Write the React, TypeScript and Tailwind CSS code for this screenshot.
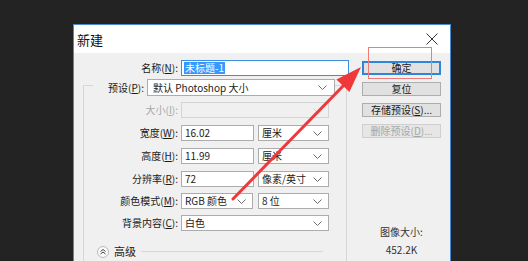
import React from "react";

function Chev({ color = "#6b6b6b" }: { color?: string }) {
  return (
    <svg width="9" height="5" viewBox="0 0 9 5" className="shrink-0">
      <polyline points="0.5,0.5 4.5,4.5 8.5,0.5" fill="none" stroke={color} strokeWidth="1" />
    </svg>
  );
}

function U({ children }: { children: React.ReactNode }) {
  return <span className="underline underline-offset-[1px]">{children}</span>;
}

function Label({ children, disabled }: { children: React.ReactNode; disabled?: boolean }) {
  return (
    <div className={`w-[95px] shrink-0 text-right leading-none whitespace-nowrap pr-[1px] ${disabled ? "text-[#a8a8a8]" : "text-[#1a1a1a]"}`}>
      {children}
    </div>
  );
}

function Input({ w, children }: { w: string; children?: React.ReactNode }) {
  return (
    <div className={`${w} h-full bg-white border border-[#acacac] flex items-center pl-[3px] leading-none`}>
      {children}
    </div>
  );
}

function Select({ w, children }: { w: string; children?: React.ReactNode }) {
  return (
    <div className={`${w} h-full bg-white border border-[#acacac] flex items-center justify-between pl-[3px] pr-[6px] leading-none whitespace-nowrap`}>
      <span>{children}</span>
      <Chev />
    </div>
  );
}

function Btn({ children, primary, disabled }: { children: React.ReactNode; primary?: boolean; disabled?: boolean }) {
  const cls = primary
    ? "border-2 border-[#2f84dc] bg-[#e1e1e1] text-[#1a1a1a]"
    : disabled
    ? "border border-[#cfcfcf] bg-[#e6e6e6] text-[#a6a6a6]"
    : "border border-[#adadad] bg-[#e1e1e1] text-[#1a1a1a]";
  return (
    <div className={`w-[79px] h-[14px] flex items-center justify-center leading-none whitespace-nowrap ${cls}`}>{children}</div>
  );
}

export default function App() {
  return (
    <div className="relative w-[528px] h-[261px] overflow-hidden bg-[#232323] font-['Noto_Sans_CJK_SC',sans-serif] text-[10px] text-[#1a1a1a]">
      <div className="pl-[73px] pt-[24px]">
        <div className="w-[378px] h-[260px] border border-[#4a8bd0] flex flex-col">
          {/* title bar */}
          <div className="h-[28px] shrink-0 bg-white flex items-center justify-between pl-[3px] pr-[12px]">
            <span className="text-[13px] leading-none text-[#111]">新建</span>
            <svg width="12" height="12" viewBox="0 0 12 12">
              <line x1="0.5" y1="0.5" x2="11.5" y2="11.5" stroke="#333" strokeWidth="1" />
              <line x1="11.5" y1="0.5" x2="0.5" y2="11.5" stroke="#333" strokeWidth="1" />
            </svg>
          </div>
          {/* body */}
          <div className="flex-1 bg-[#f0f0f0] flex">
            {/* left panel */}
            <div className="w-[276px] shrink-0 flex flex-col">
              <div className="mt-[7px] h-[16px] flex items-center">
                <div className="w-[105px] shrink-0 text-right leading-none whitespace-nowrap pr-[1px]">
                  名称(<U>N</U>):
                </div>
                <div className="ml-[2px] w-[168px] h-full bg-white border border-[#3c8ee0] flex items-center pl-[2px] leading-none">
                  <span className="bg-[#3399ff] text-white px-[1px] py-[1px]">未标题-1</span>
                </div>
              </div>
              {/* group box */}
              <div className="mt-[9px] ml-[9px] w-[264px] flex-1 border-t border-l border-r border-[#d6d6d6] flex flex-col">
                <div className="-mt-[7px] h-[17px] flex items-center">
                  <div className="ml-[9px] w-[54px] h-full bg-[#f0f0f0] pr-[3px] flex items-center justify-end leading-none whitespace-nowrap">
                    预设(<U>P</U>):
                  </div>
                  <div className="w-[188px] h-full bg-white border border-[#acacac] flex items-center justify-between pl-[5px] pr-[7px] leading-none">
                    <span>默认 Photoshop 大小</span>
                    <Chev />
                  </div>
                </div>
                <div className="mt-[6px] h-[16px] flex items-center">
                  <Label disabled>
                    大小(<U>I</U>):
                  </Label>
                  <div className="ml-[2px] w-[148px] h-full bg-[#f0f0f0] border border-[#d4d4d4] flex items-center justify-end pr-[6px]">
                    <Chev color="#d6d6d6" />
                  </div>
                </div>
                <div className="mt-[7px] h-[16px] flex items-center">
                  <Label>
                    宽度(<U>W</U>):
                  </Label>
                  <div className="ml-[2px] h-full flex gap-[4px]">
                    <Input w="w-[73px]">16.02</Input>
                    <Select w="w-[71px]">厘米</Select>
                  </div>
                </div>
                <div className="mt-[7px] h-[16px] flex items-center">
                  <Label>
                    高度(<U>H</U>):
                  </Label>
                  <div className="ml-[2px] h-full flex gap-[4px]">
                    <Input w="w-[73px]">11.99</Input>
                    <Select w="w-[71px]">厘米</Select>
                  </div>
                </div>
                <div className="mt-[7px] h-[16px] flex items-center">
                  <Label>
                    分辨率(<U>R</U>):
                  </Label>
                  <div className="ml-[2px] h-full flex gap-[4px]">
                    <Input w="w-[73px]">72</Input>
                    <Select w="w-[71px]">像素/英寸</Select>
                  </div>
                </div>
                <div className="mt-[6px] h-[16px] flex items-center">
                  <Label>
                    颜色模式(<U>M</U>):
                  </Label>
                  <div className="ml-[2px] h-full flex gap-[5px]">
                    <Select w="w-[72px]">RGB 颜色</Select>
                    <Select w="w-[71px]">8 位</Select>
                  </div>
                </div>
                <div className="mt-[6px] h-[16px] flex items-center">
                  <Label>
                    背景内容(<U>C</U>):
                  </Label>
                  <div className="ml-[2px] h-full flex">
                    <Select w="w-[148px]">白色</Select>
                  </div>
                </div>
                <div className="mt-[14px] h-[13px] flex items-center">
                  <svg width="12" height="12" viewBox="0 0 12 12" className="ml-[13px] shrink-0">
                    <circle cx="6" cy="6" r="5.5" fill="#fafafa" stroke="#b9b9b9" />
                    <polyline points="3.5,5.5 6,3.5 8.5,5.5" fill="none" stroke="#444" strokeWidth="1" />
                    <polyline points="3.5,8 6,6 8.5,8" fill="none" stroke="#444" strokeWidth="1" />
                  </svg>
                  <span className="ml-[5px] leading-none text-[11px]">高级</span>
                  <div className="ml-[5px] mr-[23px] flex-1 border-t border-[#d6d6d6]" />
                </div>
              </div>
            </div>
            {/* right panel */}
            <div className="flex-1 flex flex-col pt-[8px] pl-[12px]">
              <Btn primary>确定</Btn>
              <div className="mt-[7px]">
                <Btn>复位</Btn>
              </div>
              <div className="mt-[7px]">
                <Btn>
                  存储预设(<U>S</U>)...
                </Btn>
              </div>
              <div className="mt-[7px]">
                <Btn disabled>
                  删除预设(<U>D</U>)...
                </Btn>
              </div>
              <div className="mt-[86px] w-[79px] text-center leading-[16px] text-[#333]">图像大小:</div>
              <div className="mt-[2px] w-[79px] text-center leading-[16px] text-[#333]">452.2K</div>
            </div>
          </div>
        </div>
      </div>
      {/* annotation overlay */}
      <svg className="absolute left-0 top-0 pointer-events-none" width="528" height="261" viewBox="0 0 528 261">
        <rect x="368.5" y="47.5" width="63" height="31" fill="none" stroke="#f07a7a" strokeWidth="1" />
        <line x1="233" y1="199" x2="346" y2="83" stroke="#f0383a" strokeWidth="3" strokeLinecap="round" />
        <polygon points="361,67 349.4,92 336.4,79.4" fill="#f0383a" />
      </svg>
    </div>
  );
}
